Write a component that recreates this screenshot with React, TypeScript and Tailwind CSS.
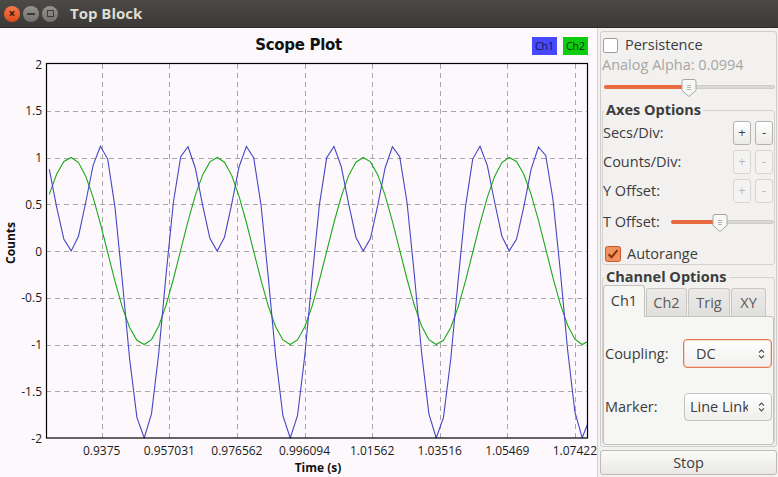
import React from "react";

// geometry of the scope canvas (page px, svg is offset by 62px vertically)
const TOP = 62;
const LEFT = 46;
const RIGHT = 588;
const ZERO_Y = 251 - TOP;
const PER_UNIT = 93.5;
const X0 = 143.9;
const PERIOD = 146.3;

const yTicks = [2, 1.5, 1, 0.5, 0, -0.5, -1, -1.5, -2];
const xTicks = [
  { x: 101.7, label: "0.9375" },
  { x: 169.3, label: "0.957031" },
  { x: 236.9, label: "0.976562" },
  { x: 304.5, label: "0.996094" },
  { x: 372.1, label: "1.01562" },
  { x: 439.7, label: "1.03516" },
  { x: 507.3, label: "1.05469" },
  { x: 574.9, label: "1.07422" },
];

const toY = (v: number) => ZERO_Y - v * PER_UNIT;

function trace(fn: (th: number) => number) {
  const out: string[] = [];
  for (let x = 49.3; x <= 590; x += 7.3) {
    const th = (2 * Math.PI * (x - X0)) / PERIOD;
    out.push(`${x.toFixed(1)},${toY(fn(th)).toFixed(1)}`);
  }
  return out.join(" ");
}

const ch1 = trace((th) => -Math.cos(th) - Math.cos(2 * th));
const ch2 = trace((th) => -Math.cos(th));

const TitleBar = () => (
  <div className="h-[28px] flex items-center bg-gradient-to-b from-[#4b4a46] to-[#3b3a36] border-b border-[#2c2b28]">
    <div className="flex items-center gap-[3px] pl-[4px]">
      <div className="w-[16px] h-[16px] rounded-full bg-gradient-to-b from-[#f37a4c] to-[#dd4814] flex items-center justify-center text-[#3a1a0c] text-[12px] leading-none font-bold">
        ×
      </div>
      <div className="w-[16px] h-[16px] rounded-full bg-gradient-to-b from-[#95948f] to-[#72716c] flex items-center justify-center">
        <div className="w-[8px] h-[2px] bg-[#3c3b37]" />
      </div>
      <div className="w-[16px] h-[16px] rounded-full bg-gradient-to-b from-[#95948f] to-[#72716c] flex items-center justify-center">
        <div className="w-[7px] h-[7px] border border-[#3c3b37]" />
      </div>
    </div>
    <span className="ml-[12px] text-[15px] font-bold text-[#dfdbd2]">Top Block</span>
  </div>
);

const ScopePlot = () => (
  <div className="w-[597px] bg-[#fcf8fc] flex flex-col">
    {/* Title + legend */}
    <div className="relative h-[34px] flex items-center justify-center">
      <span className="text-[15px] font-bold text-[#111] font-['DejaVu_Sans',sans-serif] tracking-[-0.3px]">
        Scope Plot
      </span>
      <div className="absolute left-[532px] top-[9px] flex gap-[6px] text-[10.5px] leading-none">
        <div className="w-[25px] h-[18px] bg-[#4848ff] text-[#101050] flex items-center justify-center">Ch1</div>
        <div className="w-[25px] h-[18px] bg-[#10cc10] text-[#063006] flex items-center justify-center">Ch2</div>
      </div>
    </div>

    {/* Canvas */}
    <svg width={597} height={415} overflow="visible" className="block overflow-visible font-['Open_Sans',sans-serif]">
      <defs>
        <clipPath id="frame">
          <rect x={LEFT} y={1.5} width={RIGHT - LEFT} height={375} />
        </clipPath>
      </defs>
      <g stroke="#a9a6aa" strokeWidth={1} strokeDasharray="5 4">
        {[1.5, 1, 0.5, 0, -0.5, -1, -1.5].map((v) => (
          <line key={v} x1={LEFT} x2={RIGHT} y1={Math.round(toY(v)) + 0.5} y2={Math.round(toY(v)) + 0.5} />
        ))}
        {xTicks.map((t) => (
          <line key={t.label} x1={Math.round(t.x) + 0.5} x2={Math.round(t.x) + 0.5} y1={2} y2={376} />
        ))}
      </g>
      <g clipPath="url(#frame)" fill="none" strokeWidth={1.1}>
        <polyline points={ch2} stroke="#1aaa1a" />
        <polyline points={ch1} stroke="#4646c4" />
      </g>
      <rect x={LEFT + 0.5} y={1.5} width={RIGHT - LEFT - 1} height={374.5} fill="none" stroke="#000" strokeWidth={1.2} />
      <g fontSize={12} fill="#1a1a1a">
        {yTicks.map((v) => (
          <text key={v} x={42} y={toY(v)} textAnchor="end" dominantBaseline="central">
            {String(v)}
          </text>
        ))}
        {xTicks.map((t) => (
          <text key={t.label} x={t.x} y={388} textAnchor="middle" dominantBaseline="central">
            {t.label}
          </text>
        ))}
      </g>
      <text x={318} y={405} textAnchor="middle" dominantBaseline="central" fontSize={12} fontWeight="bold" fill="#111">
        Time (s)
      </text>
      <text
        x={10}
        y={181}
        textAnchor="middle"
        dominantBaseline="central"
        fontSize={12}
        fontWeight="bold"
        fill="#111"
        transform="rotate(-90 10 181)"
      >
        Counts
      </text>
    </svg>
  </div>
);

const Handle = () => (
  <svg width={16} height={20} viewBox="0 0 16 20" className="block">
    <path d="M3 1.5h10a2 2 0 0 1 2 2v9l-7 6-7-6v-9a2 2 0 0 1 2-2z" fill="#f8f8f7" stroke="#a8a7a4" />
    <path d="M6 7.5h4M6 9.5h4M6 11.5h4" stroke="#b4b3b0" strokeWidth={1} />
  </svg>
);

const Slider = ({ width, fill }: { width: number; fill: number }) => (
  <div className="relative h-[20px] flex items-center" style={{ width }}>
    <div className="h-[4px] w-full rounded-full bg-[#d9d8d5] border border-[#cfcdca]" />
    <div className="absolute left-0 h-[4px] rounded-full bg-[#e86b3f]" style={{ width: fill }} />
    <div className="absolute top-[1px]" style={{ left: fill - 7 }}>
      <Handle />
    </div>
  </div>
);

const PmButton = ({ label, disabled }: { label: string; disabled?: boolean }) => (
  <div
    className={
      disabled
        ? "w-[18px] h-[24px] rounded-[3px] border border-[#d6d5d2] bg-[#f4f3f2] text-[#b9b8b5] flex items-center justify-center text-[13px]"
        : "w-[18px] h-[24px] rounded-[3px] border border-[#b3b2ae] bg-gradient-to-b from-[#ffffff] to-[#ecebe9] text-[#3c3c3c] flex items-center justify-center text-[13px]"
    }
  >
    {label}
  </div>
);

const Spin = () => (
  <svg width={7} height={12} viewBox="0 0 7 12" className="block">
    <path d="M1 4.5l2.5-2.5 2.5 2.5M1 7.5l2.5 2.5 2.5-2.5" fill="none" stroke="#4c4c4c" strokeWidth={1.1} />
  </svg>
);

const ControlPanel = () => (
  <div className="flex-1 bg-[#f2f1f0] border-l border-[#d4d3d0] flex flex-col text-[14.5px] text-[#3c3c3c] pl-[2px] pr-[1px]">
    <div className="mt-[3px] flex-1 min-h-0 border border-[#cfcdca] rounded-[3px] flex flex-col px-[1px]">
      {/* Persistence */}
      <div className="mt-[5px] h-[16px] flex items-center gap-[7px] pl-[1px]">
        <div className="w-[15px] h-[15px] rounded-[2px] border border-[#9f9e9a] bg-white" />
        <span>Persistence</span>
      </div>
      <div className="mt-[3px] h-[18px] flex items-center text-[#a7a6a3]">Analog Alpha: 0.0994</div>
      <div className="mt-[3px] pl-[2px]">
        <Slider width={171} fill={84} />
      </div>

      {/* Axes Options */}
      <fieldset className="mt-[5px] border border-[#d3d2cf] rounded-[3px] h-[163px] px-0">
        <legend className="font-bold text-[14.5px] px-[2px] ml-[1px] leading-[16px]">Axes Options</legend>
        <div className="flex flex-col">
          <div className="h-[26px] mt-[2px] flex items-center justify-between pr-[1px]">
            <span>Secs/Div:</span>
            <div className="flex gap-[4px]">
              <PmButton label="+" />
              <PmButton label="-" />
            </div>
          </div>
          <div className="h-[26px] mt-[3px] flex items-center justify-between pr-[1px]">
            <span>Counts/Div:</span>
            <div className="flex gap-[4px]">
              <PmButton label="+" disabled />
              <PmButton label="-" disabled />
            </div>
          </div>
          <div className="h-[26px] mt-[3px] flex items-center justify-between pr-[1px]">
            <span>Y Offset:</span>
            <div className="flex gap-[4px]">
              <PmButton label="+" disabled />
              <PmButton label="-" disabled />
            </div>
          </div>
          <div className="h-[24px] mt-[6px] flex items-center justify-between">
            <span>T Offset:</span>
            <Slider width={103} fill={48} />
          </div>
          <div className="h-[20px] mt-[10px] flex items-center gap-[6px] pl-[2px]">
            <svg width={16} height={16} viewBox="0 0 16 16" className="block">
              <rect x={0.5} y={0.5} width={15} height={15} rx={2} fill="#f0915f" stroke="#c9582e" />
              <path d="M3.5 8.2l3 3 6-7" fill="none" stroke="#8e2f0c" strokeWidth={2} />
            </svg>
            <span>Autorange</span>
          </div>
        </div>
      </fieldset>

      {/* Channel Options */}
      <fieldset className="mt-[4px] border border-[#d3d2cf] rounded-[3px] h-[175px] px-0">
        <legend className="font-bold text-[14.5px] px-[2px] ml-[1px] leading-[16px]">Channel Options</legend>
        <div className="flex items-end h-[32px] mt-[-1px] text-[#5a5a5a]">
          <div className="w-[42px] h-[32px] rounded-t-[3px] border border-b-0 border-[#c3c2bf] bg-[#f6f6f5] flex items-center justify-center text-[#3c3c3c] relative z-10 mb-[-1px] pb-[1px]">
            Ch1
          </div>
          <div className="w-[41px] h-[28px] rounded-t-[3px] border border-b-0 border-[#c9c8c5] bg-gradient-to-b from-[#ecebe9] to-[#e0dfdc] flex items-center justify-center ml-[1px]">
            Ch2
          </div>
          <div className="w-[42px] h-[28px] rounded-t-[3px] border border-b-0 border-[#c9c8c5] bg-gradient-to-b from-[#ecebe9] to-[#e0dfdc] flex items-center justify-center ml-[1px]">
            Trig
          </div>
          <div className="w-[35px] h-[28px] rounded-t-[3px] border border-b-0 border-[#c9c8c5] bg-gradient-to-b from-[#ecebe9] to-[#e0dfdc] flex items-center justify-center ml-[1px]">
            XY
          </div>
        </div>
        <div className="h-[129px] border border-[#c3c2bf] rounded-b-[3px] rounded-tr-[3px] bg-[#f6f6f5] flex flex-col pl-[1px] pr-[1px]">
          <div className="mt-[22px] h-[29px] flex items-center justify-between">
            <span>Coupling:</span>
            <div className="w-[89px] h-[29px] rounded-[4px] border border-[#e27b55] bg-gradient-to-b from-[#ffffff] to-[#f1f0ee] flex items-center justify-between pl-[12px] pr-[6px] shadow-[inset_0_0_0_1px_rgba(240,150,110,0.35)]">
              <span>DC</span>
              <Spin />
            </div>
          </div>
          <div className="mt-[25px] h-[28px] flex items-center justify-between">
            <span>Marker:</span>
            <div className="w-[88px] h-[28px] rounded-[4px] border border-[#c3c2bf] bg-gradient-to-b from-[#ffffff] to-[#efeeec] flex items-center pl-[5px] pr-[6px]">
              <span className="w-[59px] mr-[10px] overflow-hidden whitespace-nowrap">Line Link</span>
              <Spin />
            </div>
          </div>
        </div>
      </fieldset>
    </div>

    <div className="mt-[3px] mb-[2px] h-[25px] rounded-[3px] border border-[#bdbcb8] bg-gradient-to-b from-[#fbfbfa] to-[#e9e8e6] flex items-center justify-center">
      Stop
    </div>
  </div>
);

export default function App() {
  return (
    <div className="w-[778px] h-[477px] flex flex-col overflow-hidden font-['Open_Sans',sans-serif]">
      <TitleBar />
      <div className="flex flex-1 min-h-0">
        <ScopePlot />
        <ControlPanel />
      </div>
    </div>
  );
}
